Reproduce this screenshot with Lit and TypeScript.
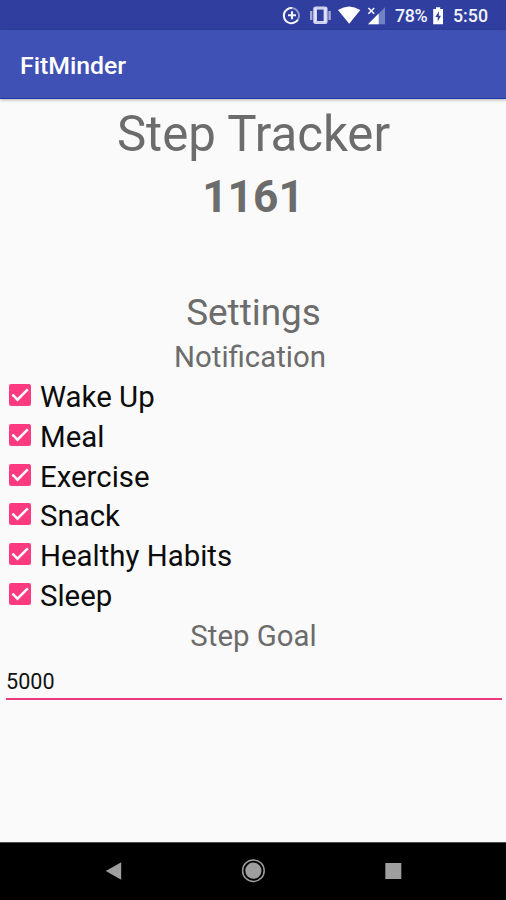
import { LitElement, html, svg, css } from "lit";
import { customElement, property, state } from "lit/decorators.js";

@customElement("status-bar")
class StatusBar extends LitElement {
  static styles = css`
    :host {
      display: flex;
      height: 30px;
      flex: none;
      background: #303f9f;
      color: #f3f4fb;
    }
    svg { display: block; height: 30px; }
    .bar { margin-left: auto; display: flex; width: 236px; }
    .icons { width: 125px; flex: none; }
    .icons svg { width: 124px; }
    .text {
      font: 500 17.8px/32px Roboto, sans-serif;
      white-space: nowrap;
    }
    .percent { width: 38px; letter-spacing: -0.3px; }
    .battery { width: 10px; }
    .battery svg { width: 10px; }
    .clock { margin-left: 10px; }
  `;
  render() {
    return html`
      <div class="bar">
        <div class="icons">
          <svg viewBox="0 0 124 30" fill="none">
            <path d="M22.5 8.1A7.6 7.6 0 1 0 28 19.4" stroke="#f3f4fb" stroke-width="2.1" />
            <path d="M22.5 8.1A7.6 7.6 0 0 1 28 19.4" stroke="#8f98cc" stroke-width="1.9" />
            <path d="M22 11.3V19.3M18 15.3H26" stroke="#f3f4fb" stroke-width="2.1" />
            <path d="M41.2 11V20M59.6 11V20" stroke="#a4abd8" stroke-width="2.4" />
            <rect x="43.2" y="6.5" width="14.4" height="17.6" rx="2.5" fill="#cdd1ed" />
            <rect x="47" y="9.6" width="6.6" height="11.4" fill="#303f9f" />
            <path d="M45.4 8V22.6M55.2 8V22.6" stroke="#e8eaf8" stroke-width="1.3" />
            <path d="M68 10Q79 3 90.3 10L79.2 23.8Z" fill="#fff" />
            <path d="M115 7.3V24.3H98Z" fill="#7280c4" />
            <path d="M108.7 13.6V24.3H98Z" fill="#fff" />
            <path d="M98.4 8L104.2 13.8M104.2 8L98.4 13.8" stroke="#f3f4fb" stroke-width="1.6" />
          </svg>
        </div>
        <span class="text percent">78%</span>
        <div class="battery">
          <svg viewBox="0 0 10 30">
            <path d="M0.2 9H3V7.2H7.2V9H10V24.2H0.2Z" fill="#fff" />
            <path d="M6 11.2L2.3 17H4.7V21.5L8 15.7H5.8Z" fill="#303f9f" />
          </svg>
        </div>
        <span class="text clock">5:50</span>
      </div>
    `;
  }
}

@customElement("check-row")
class CheckRow extends LitElement {
  @property() label = "";
  @property({ type: Boolean }) checked = false;
  static styles = css`
    :host { display: block; height: 39.75px; }
    .row {
      display: flex;
      height: 100%;
      padding-left: 9px;
      gap: 9px;
      cursor: pointer;
    }
    .box { display: block; flex: none; width: 22px; height: 22px; margin-top: 7px; }
    .label { font: 400 29.4px/40.75px Roboto, sans-serif; color: #0c0c0c; white-space: nowrap; }
  `;
  render() {
    return html`
      <div class="row" role="checkbox" aria-checked=${this.checked} @click=${() => (this.checked = !this.checked)}>
        <svg class="box" viewBox="0 0 22 22">
          ${this.checked
            ? svg`
                <rect width="22" height="22" rx="2.2" fill="#ff3b80" />
                <path d="M3.4 10.6L8.5 15.7L18.8 5.4" fill="none" stroke="#fff" stroke-width="2.5" />`
            : svg`<rect x="1.2" y="1.2" width="19.6" height="19.6" rx="1.5" fill="none" stroke="#757575" stroke-width="2.4" />`}
        </svg>
        <span class="label">${this.label}</span>
      </div>
    `;
  }
}

@customElement("nav-bar")
class NavBar extends LitElement {
  static styles = css`
    :host {
      display: flex;
      align-items: center;
      justify-content: space-between;
      box-sizing: border-box;
      height: 58px;
      flex: none;
      padding: 0 101px 2px;
      background: #000;
      border-top: 1px solid #4a4a4a;
    }
    svg { display: block; width: 24px; height: 24px; }
  `;
  render() {
    return html`
      <svg viewBox="0 0 24 24"><path d="M4.8 12L20.2 3.2V20.8Z" fill="#9e9e9e" /></svg>
      <svg viewBox="0 0 24 24">
        <circle cx="12.4" cy="11.7" r="8.1" fill="#9e9e9e" />
        <circle cx="12.4" cy="11.7" r="10.8" fill="none" stroke="#9e9e9e" stroke-width="1.5" />
      </svg>
      <svg viewBox="0 0 24 24"><rect x="4.3" y="4" width="16" height="16" fill="#9e9e9e" /></svg>
    `;
  }
}

@customElement("app-root")
class AppRoot extends LitElement {
  @state() private reminders = ["Wake Up", "Meal", "Exercise", "Snack", "Healthy Habits", "Sleep"];

  static styles = css`
    :host {
      display: flex;
      flex-direction: column;
      height: 900px;
      background: #fafafa;
      font-family: Roboto, sans-serif;
      color: #6c6c6c;
      overflow: hidden;
    }
    .toolbar {
      flex: none;
      box-sizing: border-box;
      height: 69px;
      padding-left: 20px;
      background: #3f51b5;
      border-bottom: 1px solid #2339a4;
      box-shadow: 0 1px 3px rgba(0, 0, 0, 0.3);
      color: #fff;
      font-size: 24.8px;
      font-weight: 500;
      line-height: 71px;
    }
    main { flex: 1; min-height: 0; padding-top: 6px; text-align: center; }
    h1, h2, h3, p { margin: 0; font-weight: 400; white-space: nowrap; }
    .title { padding-left: 1px; font-size: 49.2px; line-height: 58px; }
    .count { font-size: 44.3px; font-weight: 700; line-height: 68px; }
    .settings { margin-top: 58px; padding-left: 1px; font-size: 36.9px; line-height: 48px; }
    .section { padding-left: 1px; font-size: 29.4px; line-height: 40px; }
    .notification { padding-right: 7px; }
    .list { text-align: left; }
    .goal {
      display: block;
      box-sizing: border-box;
      width: 496px;
      height: 34px;
      margin: 10px 0 0 6px;
      padding: 0;
      border: 0;
      border-bottom: 2px solid #f03a80;
      outline: 0;
      background: transparent;
      color: #111;
      font: 400 21.6px/32px Roboto, sans-serif;
    }
  `;

  render() {
    return html`
      <status-bar></status-bar>
      <header class="toolbar">FitMinder</header>
      <main>
        <h1 class="title">Step Tracker</h1>
        <p class="count">1161</p>
        <h2 class="settings">Settings</h2>
        <h3 class="section notification">Notification</h3>
        <div class="list">
          ${this.reminders.map((name) => html`<check-row .label=${name} checked></check-row>`)}
        </div>
        <h3 class="section">Step Goal</h3>
        <input class="goal" aria-label="Step Goal" value="5000" />
      </main>
      <nav-bar></nav-bar>
    `;
  }
}
